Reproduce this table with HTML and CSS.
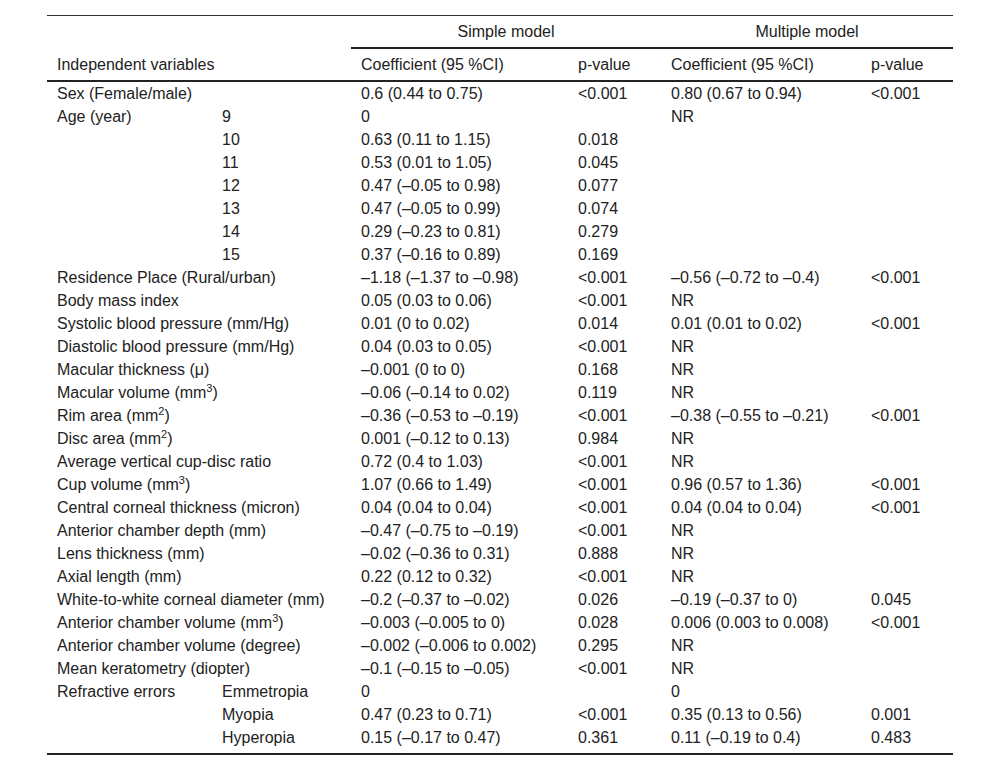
FILE: index.html
```html
<!DOCTYPE html>
<html lang="en">
<head>
<meta charset="utf-8">
<title>Regression table</title>
<link rel="stylesheet" href="styles.css">
</head>
<body>
<table class="data">
  <colgroup>
    <col class="c-a"><col class="c-b"><col class="c-c"><col class="c-d"><col class="c-e"><col class="c-f">
  </colgroup>
  <thead>
    <tr class="h1">
      <th colspan="2" rowspan="2" class="label-head">Independent variables</th>
      <th colspan="2" class="span">Simple model</th>
      <th colspan="2" class="span">Multiple model</th>
    </tr>
    <tr class="h2">
      <th>Coefficient (95 %CI)</th>
      <th>p-value</th>
      <th>Coefficient (95 %CI)</th>
      <th>p-value</th>
    </tr>
  </thead>
  <tbody>
    <tr><td colspan="2">Sex (Female/male)</td><td>0.6 (0.44 to 0.75)</td><td>&lt;0.001</td><td>0.80 (0.67 to 0.94)</td><td>&lt;0.001</td></tr>
    <tr><td>Age (year)</td><td>9</td><td>0</td><td></td><td>NR</td><td></td></tr>
    <tr><td></td><td>10</td><td>0.63 (0.11 to 1.15)</td><td>0.018</td><td></td><td></td></tr>
    <tr><td></td><td>11</td><td>0.53 (0.01 to 1.05)</td><td>0.045</td><td></td><td></td></tr>
    <tr><td></td><td>12</td><td>0.47 (–0.05 to 0.98)</td><td>0.077</td><td></td><td></td></tr>
    <tr><td></td><td>13</td><td>0.47 (–0.05 to 0.99)</td><td>0.074</td><td></td><td></td></tr>
    <tr><td></td><td>14</td><td>0.29 (–0.23 to 0.81)</td><td>0.279</td><td></td><td></td></tr>
    <tr><td></td><td>15</td><td>0.37 (–0.16 to 0.89)</td><td>0.169</td><td></td><td></td></tr>
    <tr><td colspan="2">Residence Place (Rural/urban)</td><td>–1.18 (–1.37 to –0.98)</td><td>&lt;0.001</td><td>–0.56 (–0.72 to –0.4)</td><td>&lt;0.001</td></tr>
    <tr><td colspan="2">Body mass index</td><td>0.05 (0.03 to 0.06)</td><td>&lt;0.001</td><td>NR</td><td></td></tr>
    <tr><td colspan="2">Systolic blood pressure (mm/Hg)</td><td>0.01 (0 to 0.02)</td><td>0.014</td><td>0.01 (0.01 to 0.02)</td><td>&lt;0.001</td></tr>
    <tr><td colspan="2">Diastolic blood pressure (mm/Hg)</td><td>0.04 (0.03 to 0.05)</td><td>&lt;0.001</td><td>NR</td><td></td></tr>
    <tr><td colspan="2">Macular thickness (μ)</td><td>–0.001 (0 to 0)</td><td>0.168</td><td>NR</td><td></td></tr>
    <tr><td colspan="2">Macular volume (mm<sup>3</sup>)</td><td>–0.06 (–0.14 to 0.02)</td><td>0.119</td><td>NR</td><td></td></tr>
    <tr><td colspan="2">Rim area (mm<sup>2</sup>)</td><td>–0.36 (–0.53 to –0.19)</td><td>&lt;0.001</td><td>–0.38 (–0.55 to –0.21)</td><td>&lt;0.001</td></tr>
    <tr><td colspan="2">Disc area (mm<sup>2</sup>)</td><td>0.001 (–0.12 to 0.13)</td><td>0.984</td><td>NR</td><td></td></tr>
    <tr><td colspan="2">Average vertical cup-disc ratio</td><td>0.72 (0.4 to 1.03)</td><td>&lt;0.001</td><td>NR</td><td></td></tr>
    <tr><td colspan="2">Cup volume (mm<sup>3</sup>)</td><td>1.07 (0.66 to 1.49)</td><td>&lt;0.001</td><td>0.96 (0.57 to 1.36)</td><td>&lt;0.001</td></tr>
    <tr><td colspan="2">Central corneal thickness (micron)</td><td>0.04 (0.04 to 0.04)</td><td>&lt;0.001</td><td>0.04 (0.04 to 0.04)</td><td>&lt;0.001</td></tr>
    <tr><td colspan="2">Anterior chamber depth (mm)</td><td>–0.47 (–0.75 to –0.19)</td><td>&lt;0.001</td><td>NR</td><td></td></tr>
    <tr><td colspan="2">Lens thickness (mm)</td><td>–0.02 (–0.36 to 0.31)</td><td>0.888</td><td>NR</td><td></td></tr>
    <tr><td colspan="2">Axial length (mm)</td><td>0.22 (0.12 to 0.32)</td><td>&lt;0.001</td><td>NR</td><td></td></tr>
    <tr><td colspan="2">White-to-white corneal diameter (mm)</td><td>–0.2 (–0.37 to –0.02)</td><td>0.026</td><td>–0.19 (–0.37 to 0)</td><td>0.045</td></tr>
    <tr><td colspan="2">Anterior chamber volume (mm<sup>3</sup>)</td><td>–0.003 (–0.005 to 0)</td><td>0.028</td><td>0.006 (0.003 to 0.008)</td><td>&lt;0.001</td></tr>
    <tr><td colspan="2">Anterior chamber volume (degree)</td><td>–0.002 (–0.006 to 0.002)</td><td>0.295</td><td>NR</td><td></td></tr>
    <tr><td colspan="2">Mean keratometry (diopter)</td><td>–0.1 (–0.15 to –0.05)</td><td>&lt;0.001</td><td>NR</td><td></td></tr>
    <tr><td>Refractive errors</td><td>Emmetropia</td><td>0</td><td></td><td>0</td><td></td></tr>
    <tr><td></td><td>Myopia</td><td>0.47 (0.23 to 0.71)</td><td>&lt;0.001</td><td>0.35 (0.13 to 0.56)</td><td>0.001</td></tr>
    <tr class="last"><td></td><td>Hyperopia</td><td>0.15 (–0.17 to 0.47)</td><td>0.361</td><td>0.11 (–0.19 to 0.4)</td><td>0.483</td></tr>
  </tbody>
</table>
</body>
</html>
```

FILE: styles.css
```css
html, body {
  margin: 0;
  padding: 0;
  background: #ffffff;
}

body {
  padding-top: 15px;
  font-family: "Liberation Sans", Arial, sans-serif;
  font-size: 16px;
  color: #222222;
}

.data {
  margin-left: 47px;
  width: 906px;
  table-layout: fixed;
  border-collapse: separate;
  border-spacing: 0;
  border-top: 1px solid #333333;
  border-bottom: 2px solid #222222;
}

.c-a { width: 165px; }
.c-b { width: 139px; }
.c-c { width: 217px; }
.c-d { width: 93px; }
.c-e { width: 200px; }
.c-f { width: 92px; }

.data th,
.data td {
  padding: 0 0 0 10px;
  text-align: left;
  font-weight: normal;
  white-space: nowrap;
  line-height: 23px;
  vertical-align: middle;
}

.data .h1 th {
  height: 31px;
}

.data .h1 .span {
  text-align: center;
  padding: 0;
  border-bottom: 2px solid #222222;
}

.data .label-head {
  vertical-align: middle;
  padding-top: 33px;
  border-bottom: 2px solid #222222;
}

.data .h2 th {
  height: 31px;
  border-bottom: 2px solid #222222;
}

.data tbody td {
  height: 23px;
}

.data tbody tr.last td {
  padding-bottom: 4px;
}

.data sup {
  font-size: 11px;
  line-height: 0;
  vertical-align: 6px;
}
```
